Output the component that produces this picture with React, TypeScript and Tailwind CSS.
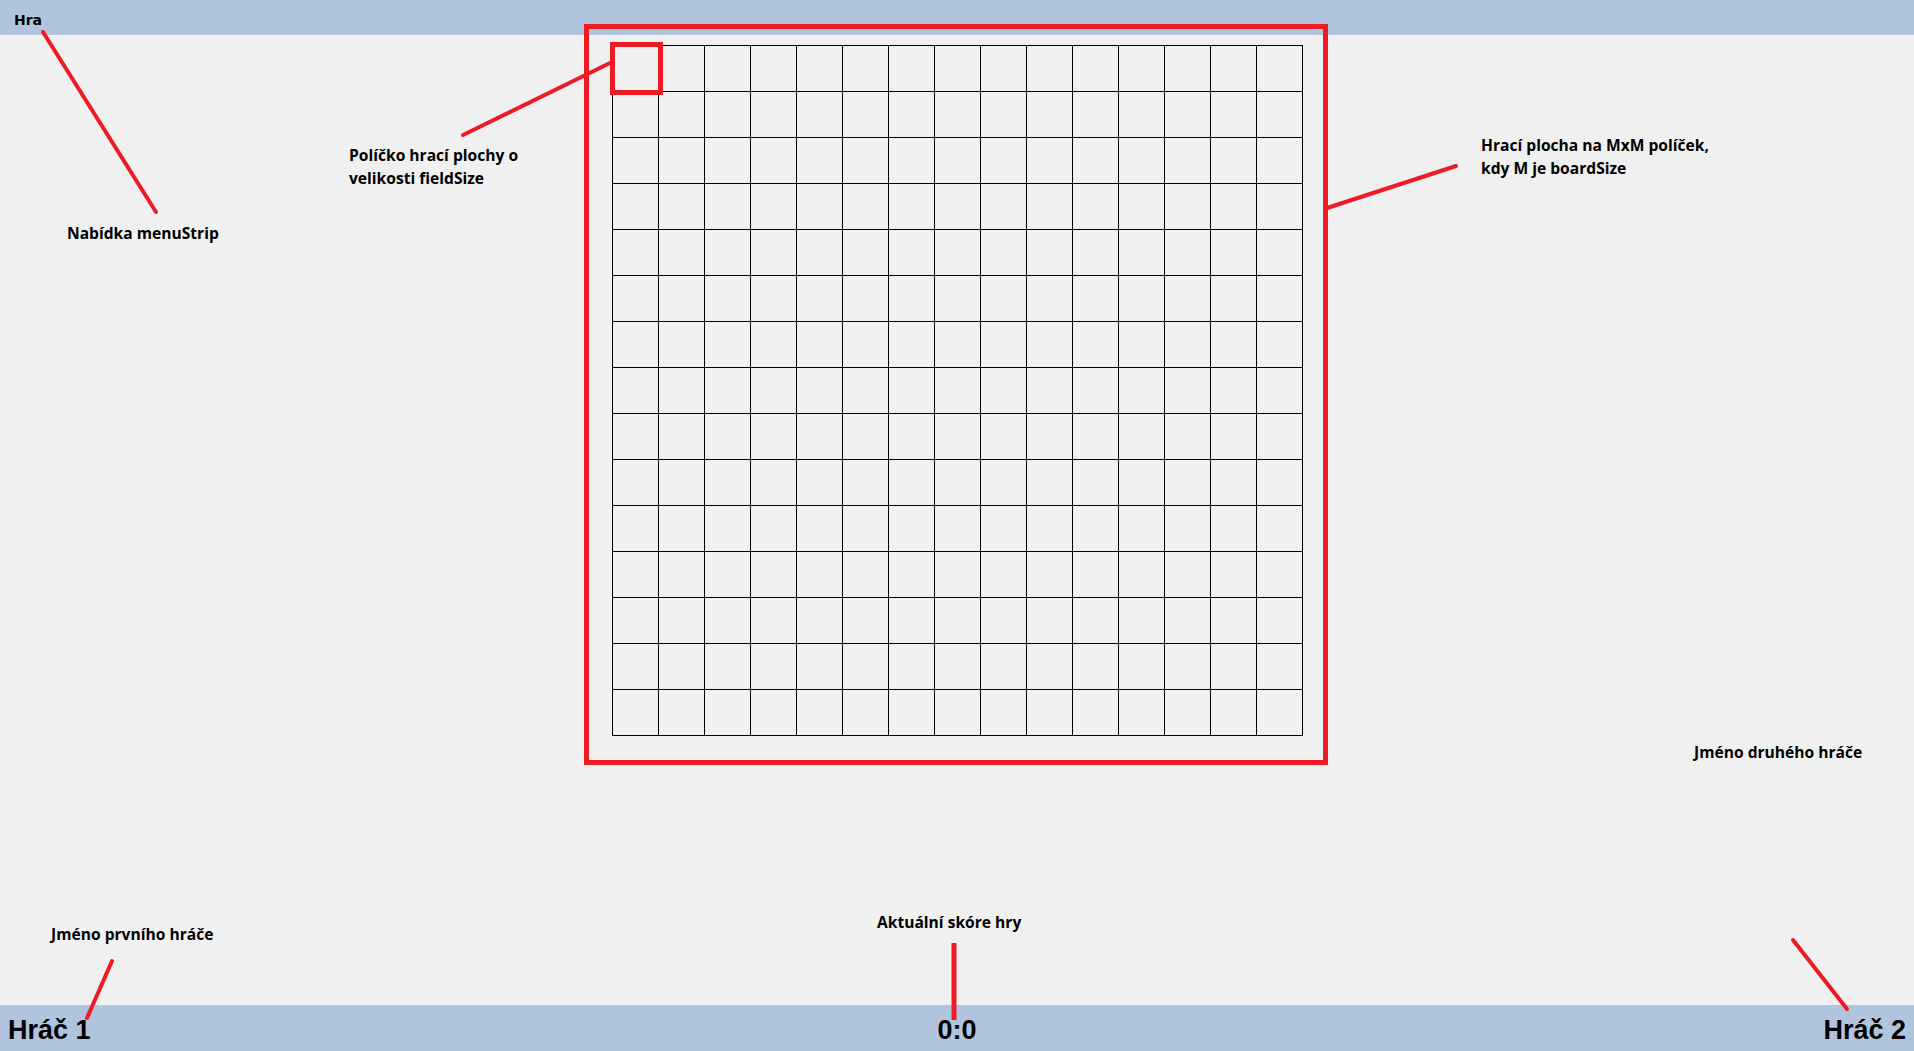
import React from "react";

const RED = "#ED1C24";
const SIZE = 15;

function Board() {
  const cells = Array.from({ length: SIZE * SIZE });
  return (
    <div className="grid grid-cols-[repeat(15,46px)] auto-rows-[46px] self-start border-l border-t border-black">
      {cells.map((_, i) => (
        <div key={i} className="h-[46px] w-[46px] border-b border-r border-black" />
      ))}
    </div>
  );
}

function Label({ className, children }: { className: string; children: React.ReactNode }) {
  return (
    <div
      className={`pointer-events-none absolute font-bold text-[15.6px] leading-[23px] text-black font-['Open_Sans',sans-serif] ${className}`}
    >
      {children}
    </div>
  );
}

export default function App() {
  return (
    <div className="relative flex h-[1051px] w-full flex-col overflow-hidden bg-[#f0f0f0]">
      {/* menuStrip */}
      <div className="h-[35px] shrink-0 bg-[#b0c4de] pl-[14px] pt-[7px]">
        <span className="font-['DejaVu_Sans',sans-serif] text-[14px] font-bold leading-[20px] text-black">Hra</span>
      </div>

      {/* game area */}
      <div className="flex flex-1 items-start justify-center pt-[10px]">
        <Board />
      </div>

      {/* status bar */}
      <div className="grid h-[46px] shrink-0 grid-cols-3 items-center bg-[#b0c4de] px-[8px] pt-[4px] font-['Liberation_Sans',Arial,sans-serif] text-[27px] font-bold leading-none text-black">
        <span>Hráč 1</span>
        <span className="text-center">0:0</span>
        <span className="text-right">Hráč 2</span>
      </div>

      {/* annotation overlay */}
      <svg className="pointer-events-none absolute inset-0" width="1914" height="1051" viewBox="0 0 1914 1051">
        <g stroke={RED} fill="none" strokeWidth={5}>
          <rect x={586.5} y={26.5} width={739} height={736} />
          <rect x={612.5} y={44.5} width={48} height={48} />
        </g>
        <g stroke={RED} strokeWidth={4} strokeLinecap="round">
          <line x1={43} y1={32} x2={156} y2={212} />
          <line x1={463} y1={135} x2={610} y2={63} />
          <line x1={1327} y1={208} x2={1456} y2={166} />
          <line x1={1793} y1={940} x2={1847} y2={1009} />
          <line x1={112} y1={961} x2={87} y2={1018} />
          <line x1={954} y1={943} x2={954} y2={1020} strokeWidth={5} strokeLinecap="butt" />
        </g>
      </svg>

      <Label className="left-[67px] top-[222px]">Nabídka menuStrip</Label>
      <Label className="left-[349px] top-[144px]">
        Políčko hrací plochy o
        <br />
        velikosti fieldSize
      </Label>
      <Label className="left-[1481px] top-[134px]">
        Hrací plocha na MxM políček,
        <br />
        kdy M je boardSize
      </Label>
      <Label className="left-[1694px] top-[741px]">Jméno druhého hráče</Label>
      <Label className="left-[51px] top-[923px]">Jméno prvního hráče</Label>
      <Label className="left-[877px] top-[911px]">Aktuální skóre hry</Label>
    </div>
  );
}
